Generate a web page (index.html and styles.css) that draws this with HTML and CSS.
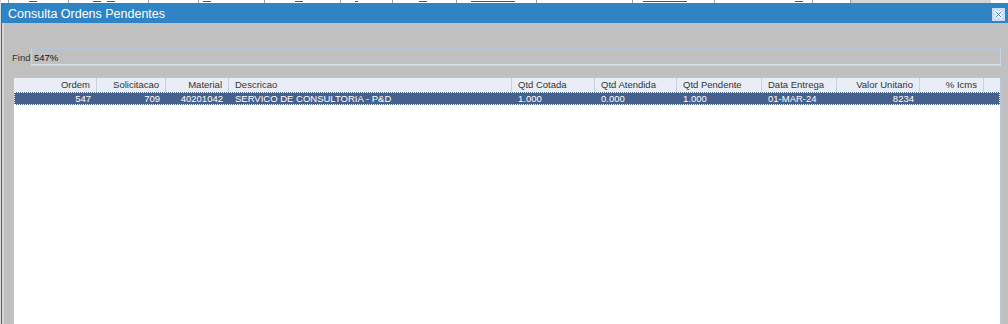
FILE: index.html
```html
<!DOCTYPE html>
<html lang="pt">
<head>
    <meta charset="UTF-8">
    <title>Consulta Ordens Pendentes</title>
    <link rel="stylesheet" href="styles.css">
</head>
<body>
    <!-- what is left visible of the form behind the dialog -->
    <div class="backdrop">
        <span class="bd-cell" style="width:8px"></span>
        <span class="bd-cell" style="width:60px"><i class="mark" style="margin-left:20px"></i></span>
        <span class="bd-cell" style="width:80px"><i class="mark" style="margin-left:24px"></i><i class="mark"></i></span>
        <span class="bd-cell" style="width:50px"></span>
        <span class="bd-cell" style="width:66px"><i class="mark" style="margin-left:4px"></i></span>
        <span class="bd-cell" style="width:76px"><i class="mark" style="margin-left:30px"></i></span>
        <span class="bd-cell" style="width:52px"><i class="mark red" style="margin-left:14px"></i></span>
        <span class="bd-cell" style="width:64px"><i class="mark" style="margin-left:26px"></i></span>
        <span class="bd-cell" style="width:80px"><i class="mark" style="margin-left:14px;width:44px"></i></span>
        <span class="bd-cell" style="width:96px"></span>
        <span class="bd-cell" style="width:82px"><i class="mark" style="margin-left:10px;width:44px"></i></span>
        <span class="bd-cell" style="width:98px"><i class="mark" style="margin-left:80px"></i></span>
        <span class="bd-cell" style="width:38px"></span>
        <span class="bd-cell grey" style="width:140px"></span>
    </div>

    <div class="window">
        <div class="titlebar">
            <span class="title">Consulta Ordens Pendentes</span>
            <span class="close-btn">
                <svg width="13" height="13" viewBox="0 0 13 13">
                    <rect x="0" y="0" width="13" height="13" fill="#c9def2"/>
                    <path d="M3 3 L10 10 M10 3 L3 10" stroke="#ffffff" stroke-width="3"/>
                    <path d="M3.5 3.5 L9.5 9.5 M9.5 3.5 L3.5 9.5" stroke="#3f7fbf" stroke-width="1"/>
                </svg>
            </span>
        </div>

        <div class="content">
            <div class="find-row">
                <span class="find-label">Find</span>
                <div class="find-input">547%</div>
            </div>

            <div class="grid">
                <div class="grid-line grid-head">
                    <span class="cell num">Ordem</span>
                    <span class="cell num">Solicitacao</span>
                    <span class="cell num">Material</span>
                    <span class="cell">Descricao</span>
                    <span class="cell">Qtd Cotada</span>
                    <span class="cell">Qtd Atendida</span>
                    <span class="cell">Qtd Pendente</span>
                    <span class="cell">Data Entrega</span>
                    <span class="cell num">Valor Unitario</span>
                    <span class="cell num">% Icms</span>
                    <span class="cell filler"></span>
                </div>
                <div class="grid-line grid-row selected">
                    <span class="cell num">547</span>
                    <span class="cell num">709</span>
                    <span class="cell num">40201042</span>
                    <span class="cell">SERVICO DE CONSULTORIA - P&amp;D</span>
                    <span class="cell">1.000</span>
                    <span class="cell">0.000</span>
                    <span class="cell">1.000</span>
                    <span class="cell">01-MAR-24</span>
                    <span class="cell num">8234</span>
                    <span class="cell num"></span>
                    <span class="cell filler"></span>
                </div>
            </div>
        </div>
    </div>
</body>
</html>
```

FILE: styles.css
```css
html, body {
    margin: 0;
    padding: 0;
    height: 324px;
    overflow: hidden;
    background-color: #c0c0c0;
    font-family: "Liberation Sans", Arial, sans-serif;
}

/* strip of the underlying form */
.backdrop {
    display: flex;
    height: 3px;
    background-color: #ffffff;
    border-left: 1px solid #d8d8d8;
    overflow: hidden;
}
.bd-cell {
    display: flex;
    gap: 6px;
    height: 3px;
    border-right: 1px solid #a0a0a0;
    box-sizing: border-box;
}
.bd-cell.grey {
    background-color: #d4d4d4;
    border-right: none;
}
.mark {
    display: block;
    width: 8px;
    height: 1px;
    margin-top: 1px;
    background-color: #555555;
}
.mark.red {
    width: 3px;
    background-color: #d02020;
}

/* dialog */
.window {
    border-left: 1px solid #dadada;
    height: 321px;
    box-sizing: border-box;
}
.titlebar {
    display: flex;
    align-items: center;
    justify-content: space-between;
    height: 20px;
    background-color: #2e84c4;
    border-left: 1px solid #3d6ea6;
    padding: 0 3px 0 6px;
}
.title {
    color: #ffffff;
    font-size: 12.5px;
    padding-top: 1px;
}
.close-btn {
    display: flex;
    margin-top: 2px;
}

.content {
    border-left: 1px solid #47648f;
    height: 301px;
    padding: 25px 7px 0 0;
    box-sizing: border-box;
    background: linear-gradient(to right, #d4d4d4 0, #d4d4d4 2px, #c0c0c0 2px);
}
.find-row {
    display: flex;
    align-items: center;
    height: 18px;
    margin-left: 10px;
}
.find-label {
    font-size: 9.5px;
    color: #333333;
    width: 19px;
}
.find-input {
    flex: 1;
    height: 18px;
    box-sizing: border-box;
    border: 1px solid #c8d5e6;
    border-top-color: #b4c5dc;
    box-shadow: inset 0 -1px 0 #d8e2ee;
    padding: 3px 2px 0 2px;
    font-size: 9.5px;
    color: #111111;
    background-color: #c0c0c0;
}

.grid {
    margin: 11px 0 0 11px;
    height: 260px;
    background-color: #ffffff;
    border: 1px solid #b6c6dc;
    border-radius: 2px 2px 0 0;
    box-sizing: border-box;
}
.grid-line {
    display: grid;
    grid-template-columns: 83px 69px 63px 283px 83px 82px 85px 75px 83px 64px 1fr;
}
.grid-head {
    height: 14px;
    background-color: #e9edf5;
    color: #333333;
}
.grid-head .cell {
    border-right: 1px solid #c9d2df;
}
.grid-head .filler {
    border-right: none;
}
.cell {
    font-size: 9.5px;
    line-height: 14px;
    padding: 0 6px;
    white-space: nowrap;
    overflow: hidden;
    box-sizing: border-box;
}
.cell.num {
    text-align: right;
}
.grid-row {
    height: 13px;
}
.grid-row .cell {
    line-height: 13px;
}
.selected {
    background-color: #46618b;
    color: #ffffff;
    outline: 1px dotted #ffffff;
    outline-offset: -1px;
}
```
